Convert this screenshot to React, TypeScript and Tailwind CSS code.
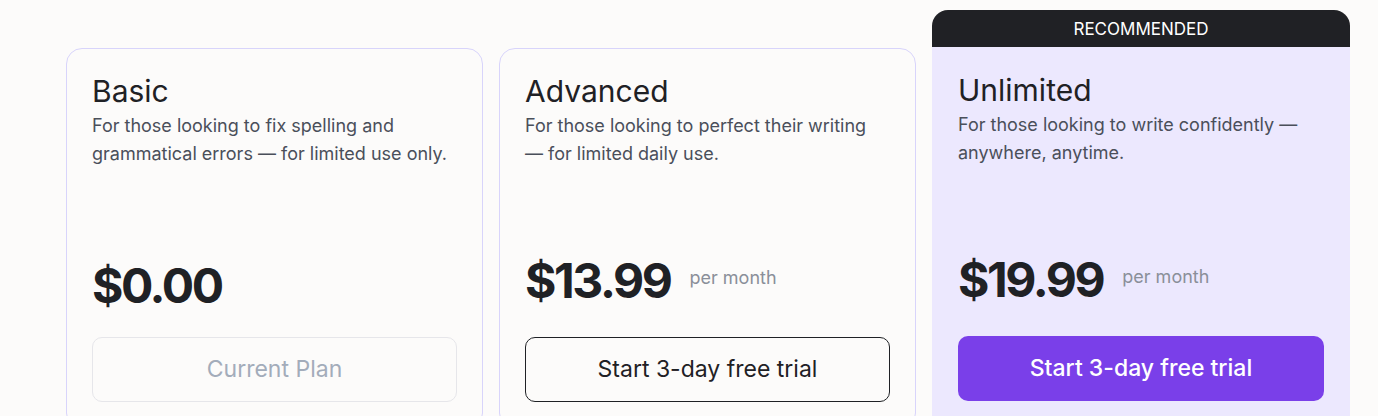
import React from 'react';

interface Plan {
  name: string;
  description: string[];
  price: string;
  perMonth?: boolean;
  cta: string;
  variant: 'current' | 'outline' | 'primary';
  recommended?: boolean;
}

const plans: Plan[] = [
  {
    name: 'Basic',
    description: ['For those looking to fix spelling and', 'grammatical errors — for limited use only.'],
    price: '$0.00',
    cta: 'Current Plan',
    variant: 'current',
  },
  {
    name: 'Advanced',
    description: ['For those looking to perfect their writing', '— for limited daily use.'],
    price: '$13.99',
    perMonth: true,
    cta: 'Start 3-day free trial',
    variant: 'outline',
  },
  {
    name: 'Unlimited',
    description: ['For those looking to write confidently —', 'anywhere, anytime.'],
    price: '$19.99',
    perMonth: true,
    cta: 'Start 3-day free trial',
    variant: 'primary',
    recommended: true,
  },
];

const buttonClass: Record<Plan['variant'], string> = {
  current: 'border border-[#e6e6ea] text-[#a3acba] bg-transparent',
  outline: 'border border-[#1f2125] text-[#1f2125] bg-transparent',
  primary: 'bg-[#7a3fe9] text-white font-medium',
};

const PlanCard: React.FC<{ plan: Plan }> = ({ plan }) => {
  const body = (
    <div
      className={
        plan.recommended
          ? 'bg-[#ece8fe] px-[26px] pt-[25px] pb-[26px] flex flex-col'
          : 'bg-[#fcfbfa] border border-[#d8d4fb] rounded-2xl px-[25px] pt-[24px] pb-[26px] flex flex-col'
      }
    >
      <h2 className="text-[30px] leading-[36px] text-[#1f2125] font-normal">{plan.name}</h2>
      <p className="mt-[3px] text-[18px] leading-[28px] text-[#4a4f5a]">
        {plan.description[0]}
        <br />
        {plan.description[1]}
      </p>
      <div className={`flex items-center h-[48px] ${plan.perMonth ? 'mt-[89px]' : 'mt-[94px]'}`}>
        <span className="text-[48px] leading-[48px] font-bold tracking-[-0.05em] text-[#1f2125]">
          {plan.price}
        </span>
        {plan.perMonth && (
          <span className="ml-[19px] text-[18px] text-[#8a8f99] -mt-[7px]">per month</span>
        )}
      </div>
      <button
        className={`${plan.perMonth ? 'mt-[32px]' : 'mt-[27px]'} h-[65px] w-full rounded-[10px] text-[23px] ${buttonClass[plan.variant]}`}
      >
        {plan.cta}
      </button>
    </div>
  );

  if (plan.recommended) {
    return (
      <div className="w-[418px] rounded-t-2xl overflow-hidden">
        <div className="h-[37px] pt-[3px] bg-[#202125] text-white text-[17px] flex items-center justify-center">
          RECOMMENDED
        </div>
        {body}
      </div>
    );
  }

  return <div className="w-[417px] mt-[38px]">{body}</div>;
};

export default function App() {
  return (
    <div
      className="h-[416px] overflow-hidden bg-[#fcfbfa] pl-[66px] pt-[10px]"
      style={{ fontFamily: 'Inter, "Noto Sans", sans-serif' }}
    >
      <div className="flex items-start gap-4">
        {plans.map((p) => (
          <PlanCard key={p.name} plan={p} />
        ))}
      </div>
    </div>
  );
}
